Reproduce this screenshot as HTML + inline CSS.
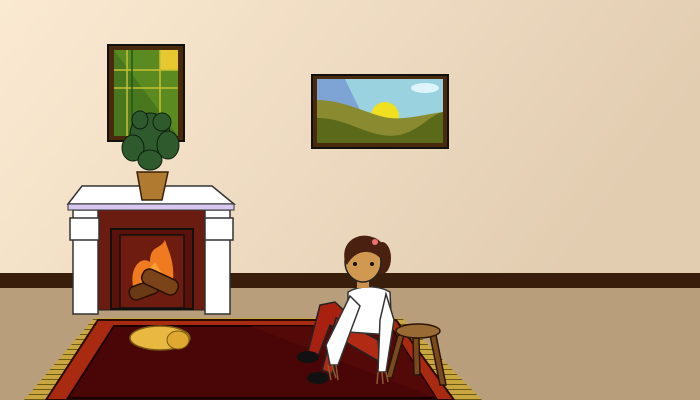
<!DOCTYPE html>
<html><head><style>html,body{margin:0;padding:0;width:700px;height:400px;overflow:hidden}</style></head>
<body>
<svg width="700" height="400" viewBox="0 0 700 400" xmlns="http://www.w3.org/2000/svg">
<defs>
<linearGradient id="wall" x1="0" y1="0" x2="1" y2="0.3">
<stop offset="0" stop-color="#fbead2"/><stop offset="1" stop-color="#e2cdb1"/></linearGradient>
<pattern id="fr" width="4" height="5" patternUnits="userSpaceOnUse"><rect width="4" height="5" fill="#c9a640"/><rect y="4" width="4" height="1" fill="#6a5a14"/></pattern>
</defs>
<rect width="700" height="280" fill="url(#wall)"/>
<rect y="273" width="700" height="15" fill="#3a1e0c"/>
<rect y="288" width="700" height="112" fill="#b99e7c"/>
<!-- rug fringe -->
<polygon points="94,318 402,318 482,400 24,400" fill="url(#fr)"/>
<polygon points="98,320 396,320 454,400 46,400" fill="#a82a10" stroke="#2a0a04" stroke-width="2"/>
<polygon points="114,326 390,326 436,398 68,398" fill="#4a0606" stroke="#1a0000" stroke-width="2"/>
<polygon points="250,326 390,326 436,398" fill="#5a0c08" opacity="0.6"/>
<!-- window -->
<rect x="108" y="45" width="76" height="96" fill="#4a2a0c" stroke="#111" stroke-width="2"/>
<rect x="114" y="50" width="64" height="86" fill="#5a8a20"/>
<rect x="160" y="50" width="18" height="20" fill="#e8c830"/>
<polygon points="114,50 114,136 178,136" fill="#3e6a1c" opacity="0.6"/>
<g stroke="#c8c030" stroke-width="1.5"><line x1="114" y1="70" x2="178" y2="70"/><line x1="114" y1="88" x2="178" y2="88"/><line x1="127" y1="50" x2="127" y2="136"/><line x1="160" y1="50" x2="160" y2="136"/></g>
<line x1="132" y1="50" x2="132" y2="136" stroke="#1a5a1a" stroke-width="1.5"/>
<!-- painting -->
<rect x="312" y="75" width="136" height="73" fill="#4a2a0c" stroke="#111" stroke-width="2"/>
<rect x="317" y="79" width="126" height="64" fill="#9ad2e0"/>
<polygon points="317,79 345,79 360,110 317,100" fill="#7090d0" opacity="0.7"/>
<circle cx="385" cy="116" r="14" fill="#f0e020"/>
<ellipse cx="425" cy="88" rx="14" ry="5" fill="#dff4f8"/>
<path d="M317,100 C340,100 360,110 380,116 C400,122 420,115 443,112 L443,143 L317,143Z" fill="#8a8a30"/>
<path d="M317,118 C350,118 370,140 400,135 C420,130 430,115 443,112 L443,143 L317,143Z" fill="#5a6a1a"/>
<!-- fireplace -->
<rect x="95" y="208" width="112" height="102" fill="#6a1c10" stroke="#222" stroke-width="1"/>
<rect x="111" y="229" width="82" height="80" fill="#5a1208" stroke="#111" stroke-width="2"/>
<rect x="120" y="235" width="64" height="73" fill="#6e1c10" stroke="#111" stroke-width="1.5"/>
<path d="M134,290 C128,270 140,255 150,262 C150,245 160,250 165,240 C170,255 176,265 172,290Z" fill="#f07a20"/>
<path d="M140,290 C138,275 150,270 155,262 C160,272 168,278 165,290Z" fill="#f8a030"/>
<g stroke="#2a1004" stroke-width="1.5"><rect x="129" y="283" width="30" height="14" rx="6" fill="#6a3a14" transform="rotate(-20 144 290)"/><rect x="141" y="274" width="38" height="16" rx="7" fill="#7a4418" transform="rotate(25 160 282)"/></g>
<rect x="73" y="210" width="25" height="104" fill="#fff" stroke="#333" stroke-width="1.5"/>
<rect x="205" y="210" width="25" height="104" fill="#fff" stroke="#333" stroke-width="1.5"/>
<rect x="70" y="218" width="29" height="22" fill="#fff" stroke="#333" stroke-width="1.5"/>
<rect x="205" y="218" width="28" height="22" fill="#fff" stroke="#333" stroke-width="1.5"/>
<polygon points="82,186 212,186 234,204 68,204" fill="#fff" stroke="#333" stroke-width="1.5"/>
<rect x="68" y="204" width="166" height="6" fill="#d8c8f0" stroke="#333" stroke-width="1"/>
<!-- plant -->
<polygon points="137,172 168,172 162,200 142,200" fill="#b07a30" stroke="#3a2008" stroke-width="1.5"/>
<g fill="#2e5a2e" stroke="#0e200e" stroke-width="1">
<ellipse cx="150" cy="135" rx="20" ry="22"/><ellipse cx="133" cy="148" rx="11" ry="13"/><ellipse cx="168" cy="145" rx="11" ry="14"/><ellipse cx="150" cy="160" rx="12" ry="10"/><ellipse cx="140" cy="120" rx="8" ry="9"/><ellipse cx="162" cy="122" rx="9" ry="9"/></g>
<!-- cat -->
<ellipse cx="160" cy="338" rx="30" ry="12" fill="#e8b840" stroke="#7a5a10" stroke-width="1.5"/>
<ellipse cx="178" cy="340" rx="11" ry="9" fill="#e0a830" stroke="#7a5a10" stroke-width="1"/>
<!-- stool -->
<g stroke="#2a1404" stroke-width="1.5" fill="#7a4a1c"><polygon points="398,335 404,335 392,378 386,378"/><polygon points="430,335 436,335 446,385 440,385"/><polygon points="413,338 419,338 420,375 414,375"/><ellipse cx="418" cy="331" rx="22" ry="7" fill="#9a6a34"/></g>
<!-- girl legs -->
<path d="M370,335 L335,302 L320,305 L308,352 L318,356 L330,325 L372,350 Z" fill="#a82010" stroke="#222" stroke-width="1.5"/>
<path d="M378,340 L336,318 L322,370 L332,374 L342,340 L380,362Z" fill="#b02a14" stroke="#222" stroke-width="1.5"/>
<ellipse cx="308" cy="357" rx="11" ry="6" fill="#111"/>
<ellipse cx="318" cy="378" rx="11" ry="6" fill="#111"/>
<!-- torso -->
<path d="M348,292 C360,285 378,285 390,292 L392,335 L348,332 Z" fill="#fff" stroke="#333" stroke-width="1.5"/>
<path d="M350,296 L326,345 L330,365 L338,365 L360,306Z" fill="#fff" stroke="#333" stroke-width="1.5"/>
<path d="M386,294 L394,320 L386,372 L378,372 L380,320Z" fill="#fff" stroke="#333" stroke-width="1.5"/>
<path d="M328,365 l3,15 M332,365 l4,13 M336,365 l2,15" stroke="#8a5a30" stroke-width="1.5"/>
<path d="M378,372 l-1,12 M382,372 l1,12 M386,372 l2,10" stroke="#8a5a30" stroke-width="1.5"/>
<rect x="357" y="278" width="12" height="10" fill="#c8904a"/>
<!-- head -->
<ellipse cx="382" cy="258" rx="9" ry="16" fill="#4a2010"/>
<ellipse cx="363" cy="262" rx="18" ry="20" fill="#d09850" stroke="#222" stroke-width="1.5"/>
<path d="M345,262 C340,240 360,232 372,237 C385,240 388,255 380,258 C370,248 355,250 347,265Z" fill="#4a2010"/>
<circle cx="355" cy="264" r="2" fill="#111"/><circle cx="372" cy="264" r="2" fill="#111"/>
<circle cx="375" cy="242" r="3" fill="#f07070"/>
</svg>
</body></html>
